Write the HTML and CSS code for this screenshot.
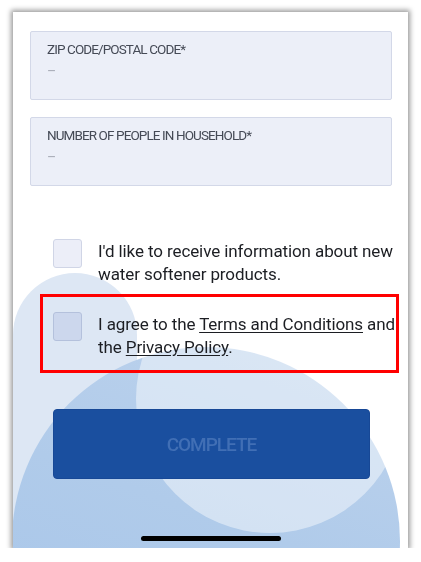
FILE: index.html
```html
<!DOCTYPE html>
<html>
<head>
  <title>Register - Household</title>
  <link rel="stylesheet" href="styles.css">
</head>
<body>
  <div class="screen">
    <div class="blob blob-left"></div>
    <div class="blob blob-big"></div>
    <div class="blob blob-glow"></div>

    <div class="content">
      <div class="field">
        <label class="field-label">ZIP CODE/POSTAL CODE*</label>
        <span class="field-value">–</span>
      </div>
      <div class="field">
        <label class="field-label">NUMBER OF PEOPLE IN HOUSEHOLD*</label>
        <span class="field-value">–</span>
      </div>

      <div class="check-row first">
        <span class="check-box"></span>
        <p class="check-text">I'd like to receive information about new water softener products.</p>
      </div>

      <div class="highlight">
        <div class="check-row">
          <span class="check-box"></span>
          <p class="check-text">I agree to the <a href="#">Terms and Conditions</a> and the <a href="#">Privacy Policy</a>.</p>
        </div>
      </div>

      <button class="complete-btn" disabled>COMPLETE</button>
    </div>

    <div class="home-bar"></div>
  </div>
</body>
</html>
```

FILE: styles.css
```css
body {
  margin: 0;
  background-color: #fff;
  font-family: 'Roboto', 'Liberation Sans', sans-serif;
}

.screen {
  position: relative;
  overflow: hidden;
  width: 395px;
  height: 536px;
  margin: 12px 0 0 13px;
  background-color: #fff;
  box-shadow: 0 0 5px 2px rgba(0,0,0,0.4);
}

/* background decoration */
.blob {
  position: absolute;
}

.blob-left {
  left: 0;
  top: 261px;
  width: 124px;
  height: 300px;
  border-radius: 62px 62px 0 0;
  background-color: #dde7f4;
}

.blob-big {
  left: -1px;
  top: 335px;
  width: 388px;
  height: 388px;
  border-radius: 50%;
  background: linear-gradient(200deg, #bed3ed 0%, #b0cbea 45%, #a5c4e9 100%);
}

.blob-glow {
  left: 123px;
  top: 253px;
  width: 268px;
  height: 268px;
  border-radius: 50%;
  background-color: rgba(255,255,255,0.45);
}

.content {
  position: relative;
  padding: 19px 12px 0 17px;
}

.field {
  height: 67px;
  margin: 0 4px 17px 0;
  border: 1px solid #d3d8e8;
  border-radius: 2px;
  background-color: #eceff8;
  padding: 0 16px;
}

.field-label {
  display: block;
  padding-top: 8px;
  font-size: 13.5px;
  line-height: 18px;
  color: #454a56;
  letter-spacing: -0.9px;
}

.field-value {
  display: block;
  margin-top: 4px;
  font-size: 14px;
  line-height: 18px;
  color: #a9adb8;
}

.check-row {
  display: flex;
  align-items: flex-start;
  gap: 16px;
  padding-left: 23px;
}

.check-row.first {
  margin-top: 53px;
}

.check-box {
  flex: none;
  width: 27px;
  height: 27px;
  border: 1px solid #d0d5e6;
  border-radius: 3px;
  background-color: #eceef8;
  mix-blend-mode: multiply;
}

.check-text {
  margin: 0;
  padding-top: 1px;
  font-size: 17px;
  line-height: 23px;
  color: #1c1e23;
  letter-spacing: -0.1px;
}

.check-text a {
  color: inherit;
  text-decoration: underline;
  text-underline-offset: 2px;
}

.highlight {
  margin: 8px -3px 0 10px;
  border: 3px solid #ff0000;
  padding: 15px 0 11px 0;
}

.highlight .check-row {
  padding-left: 10px;
}

.complete-btn {
  display: block;
  width: 317px;
  height: 70px;
  margin: 36px 0 0 23px;
  border: 1px solid #174896;
  border-radius: 4px;
  background-color: #1a4f9f;
  color: #416fb5;
  font-family: inherit;
  font-size: 19px;
  font-weight: 500;
  letter-spacing: -1px;
}

.home-bar {
  position: absolute;
  left: 128px;
  bottom: 7px;
  width: 140px;
  height: 5px;
  border-radius: 3px;
  background-color: #000;
}
```
